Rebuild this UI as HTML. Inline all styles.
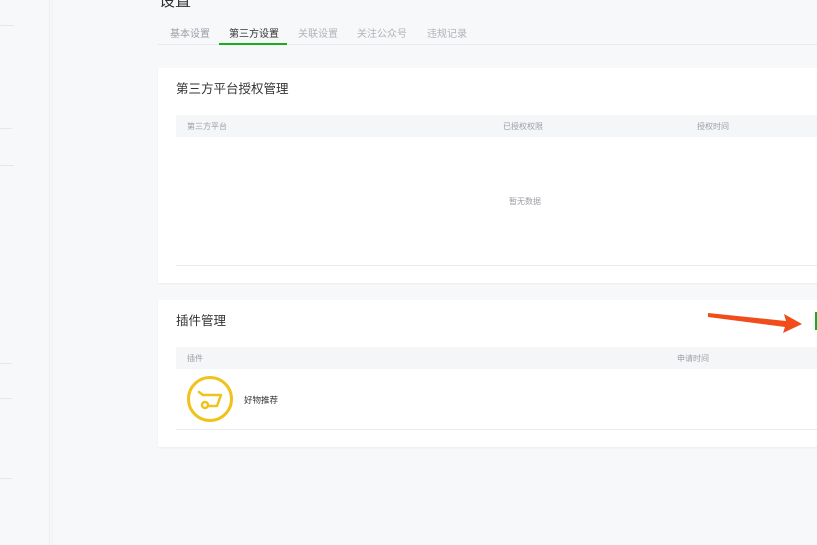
<!DOCTYPE html>
<html><head><meta charset="utf-8"><style>
body{margin:0;width:817px;height:545px;background:#f7f8fa;position:relative;overflow:hidden;font-family:"Liberation Sans","Noto Sans CJK SC",sans-serif;}
.a{position:absolute;white-space:nowrap}
.card{position:absolute;left:158px;width:700px;background:#fff;box-shadow:0 1px 2px rgba(0,0,0,.05)}
.th{position:absolute;left:176px;width:700px;height:22px;background:#f5f6f8}
.s{font-size:8px;color:#9a9ea6}
</style></head><body>
<div class="a" style="left:49px;top:0;width:1px;height:545px;background:#ebedf0"></div>
<div class="a" style="left:52px;top:0;width:1px;height:545px;background:#f0f1f3"></div>
<div class="a" style="left:0;top:25px;width:14px;height:1px;background:#e6e7ea"></div>
<div class="a" style="left:0;top:128px;width:12px;height:1px;background:#e6e7ea"></div>
<div class="a" style="left:0;top:165px;width:14px;height:1px;background:#e6e7ea"></div>
<div class="a" style="left:0;top:363px;width:12px;height:1px;background:#e6e7ea"></div>
<div class="a" style="left:0;top:398px;width:12px;height:1px;background:#e6e7ea"></div>
<div class="a" style="left:0;top:478px;width:12px;height:1px;background:#e6e7ea"></div>
<div class="a" style="left:159px;top:-13px;font-size:16px;color:#333">设置</div>
<div class="a" style="left:158px;top:44px;width:659px;height:1px;background:#e8e9ec"></div>
<div class="a" style="left:170px;top:25px;font-size:10px;color:#9a9ea6">基本设置</div>
<div class="a" style="left:229px;top:25px;font-size:10px;color:#333">第三方设置</div>
<div class="a" style="left:219px;top:43px;width:68px;height:2px;background:#1aad19"></div>
<div class="a" style="left:298px;top:25px;font-size:10px;color:#b0b3b9">关联设置</div>
<div class="a" style="left:357px;top:25px;font-size:10px;color:#b0b3b9">关注公众号</div>
<div class="a" style="left:427px;top:25px;font-size:10px;color:#b0b3b9">违规记录</div>

<div class="card" style="top:68px;height:215px"></div>
<div class="a" style="left:176px;top:78px;font-size:12.5px;color:#333">第三方平台授权管理</div>
<div class="th" style="top:115px"></div>
<div class="a s" style="left:187px;top:121px">第三方平台</div>
<div class="a s" style="left:503px;top:121px">已授权权限</div>
<div class="a s" style="left:697px;top:121px">授权时间</div>
<div class="a s" style="left:509px;top:196px">暂无数据</div>
<div class="a" style="left:176px;top:265px;width:700px;height:1px;background:#e8e9ec"></div>

<div class="card" style="top:300px;height:147px"></div>
<div class="a" style="left:176px;top:310px;font-size:12.5px;color:#333">插件管理</div>
<div class="th" style="top:347px"></div>
<div class="a s" style="left:187px;top:353px">插件</div>
<div class="a s" style="left:677px;top:353px">申请时间</div>
<svg class="a" style="left:186px;top:375px" width="48" height="48" viewBox="0 0 48 48">
<circle cx="24" cy="24" r="21.5" fill="none" stroke="#f1c21b" stroke-width="3"/>
<path d="M13 17 L17 20 L35 20 L31 31 L23 31" fill="none" stroke="#f1c21b" stroke-width="2.5" stroke-linecap="round" stroke-linejoin="round"/>
<circle cx="19" cy="30" r="3" fill="none" stroke="#f1c21b" stroke-width="2.5"/>
</svg>
<div class="a" style="left:244px;top:394px;font-size:8.5px;color:#333">好物推荐</div>
<div class="a" style="left:176px;top:429px;width:700px;height:1px;background:#e8e9ec"></div>

<svg class="a" style="left:700px;top:305px" width="110" height="30">
<path d="M8 8 L86 16 L84 9 L102 19 L83 28 L85 22 L8 12 Z" fill="#f04c1c"/>
</svg>
<div class="a" style="left:815px;top:312px;width:2px;height:18px;background:#1aad19"></div>
</body></html>
